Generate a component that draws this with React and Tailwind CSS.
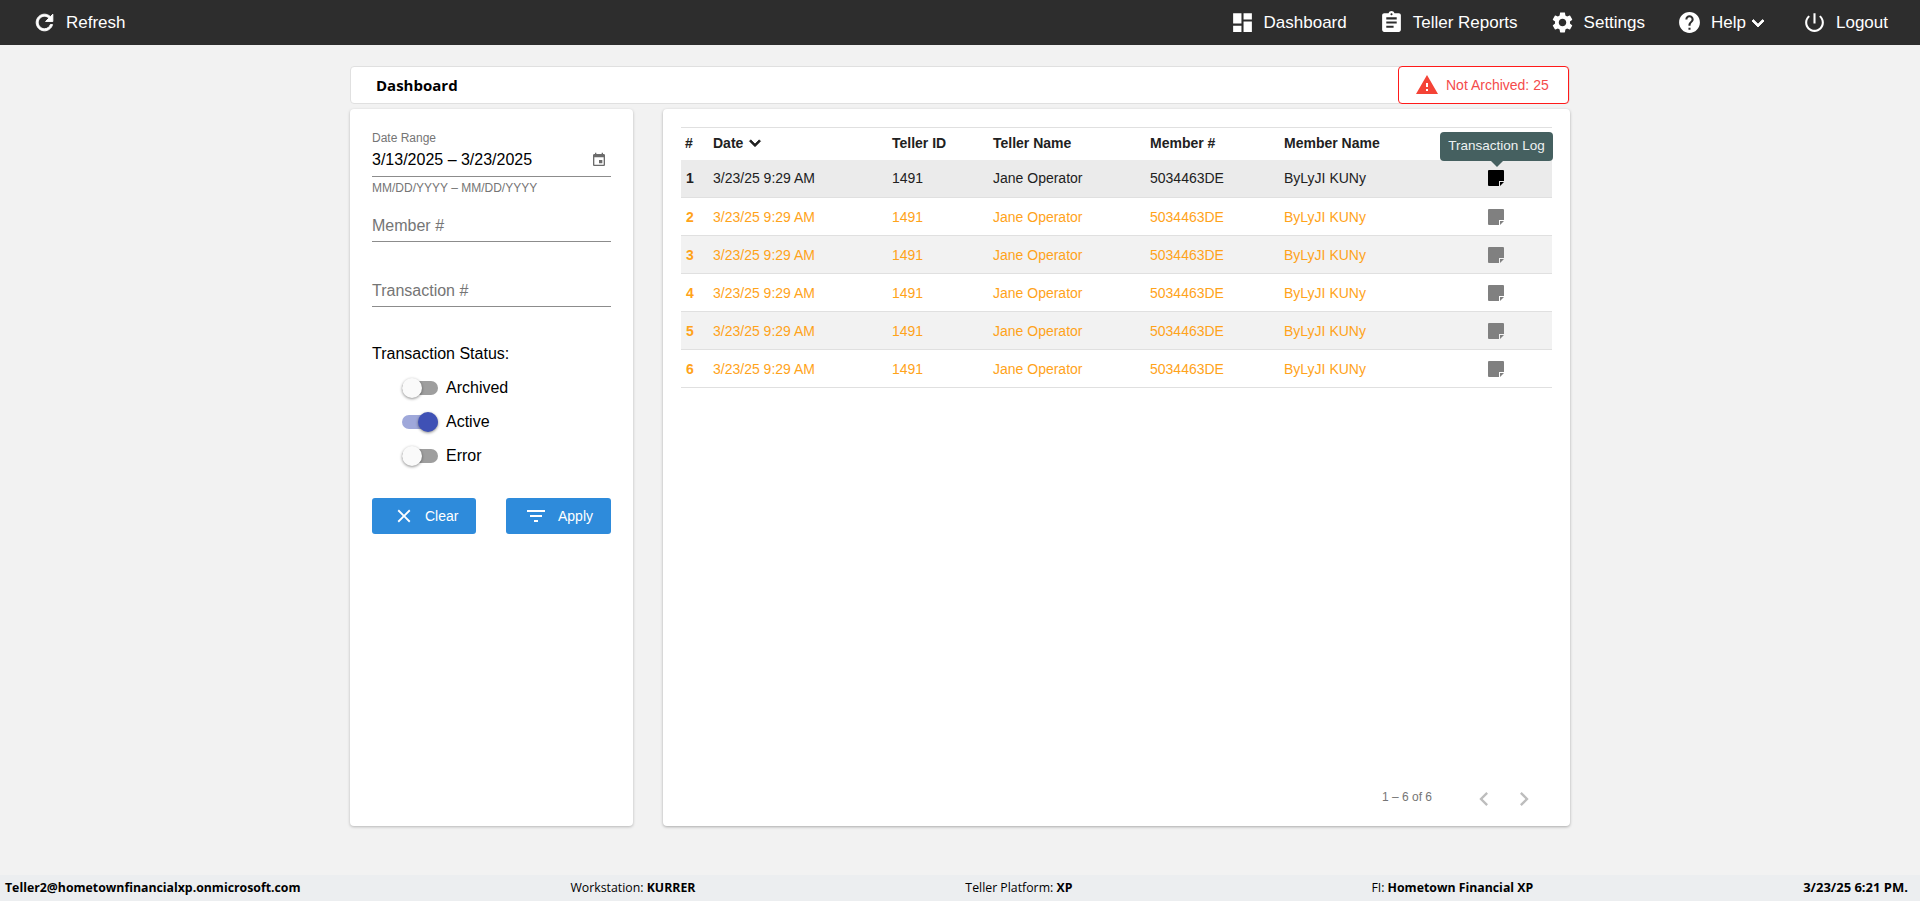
import React from "react";

const rows = [1, 2, 3, 4, 5, 6];

function MatIcon({ d, className, bold }) {
  return (
    <svg
      viewBox="0 0 24 24"
      fill="currentColor"
      stroke={bold ? "currentColor" : "none"}
      strokeWidth={bold ? 0.9 : 0}
      className={className}
    >
      <path d={d} />
    </svg>
  );
}

const icons = {
  refresh:
    "M17.65 6.35C16.2 4.9 14.21 4 12 4c-4.42 0-7.99 3.58-7.99 8s3.57 8 7.99 8c3.73 0 6.84-2.55 7.73-6h-2.08c-.82 2.33-3.04 4-5.65 4-3.31 0-6-2.69-6-6s2.69-6 6-6c1.66 0 3.14.69 4.22 1.78L13 11h7V4l-2.35 2.35z",
  dashboard: "M3 13h8V3H3v10zm0 8h8v-6H3v6zm10 0h8V11h-8v10zm0-18v6h8V3h-8z",
  assignment:
    "M19 3h-4.18C14.4 1.84 13.3 1 12 1c-1.3 0-2.4.84-2.82 2H5c-1.1 0-2 .9-2 2v14c0 1.1.9 2 2 2h14c1.1 0 2-.9 2-2V5c0-1.1-.9-2-2-2zm-7 0c.55 0 1 .45 1 1s-.45 1-1 1-1-.45-1-1 .45-1 1-1zm2 14H7v-2h7v2zm3-4H7v-2h10v2zm0-4H7V7h10v2z",
  settings:
    "M19.14 12.94c.04-.3.06-.61.06-.94 0-.32-.02-.64-.07-.94l2.03-1.58c.18-.14.23-.41.12-.61l-1.92-3.32c-.12-.22-.37-.29-.59-.22l-2.39.96c-.5-.38-1.03-.7-1.62-.94l-.36-2.54c-.04-.24-.24-.41-.48-.41h-3.84c-.24 0-.43.17-.47.41l-.36 2.54c-.59.24-1.13.57-1.62.94l-2.39-.96c-.22-.08-.47 0-.59.22L2.74 8.87c-.12.21-.08.47.12.61l2.03 1.58c-.05.3-.09.63-.09.94s.02.64.07.94l-2.03 1.58c-.18.14-.23.41-.12.61l1.92 3.32c.12.22.37.29.59.22l2.39-.96c.5.38 1.03.7 1.62.94l.36 2.54c.05.24.24.41.48.41h3.84c.24 0 .44-.17.47-.41l.36-2.54c.59-.24 1.13-.56 1.62-.94l2.39.96c.22.08.47 0 .59-.22l1.92-3.32c.12-.22.07-.47-.12-.61l-2.01-1.58zM12 15.6c-1.98 0-3.6-1.62-3.6-3.6s1.62-3.6 3.6-3.6 3.6 1.62 3.6 3.6-1.62 3.6-3.6 3.6z",
  help:
    "M12 2C6.48 2 2 6.48 2 12s4.48 10 10 10 10-4.48 10-10S17.52 2 12 2zm1 17h-2v-2h2v2zm2.07-7.75l-.9.92C13.45 12.9 13 13.5 13 15h-2v-.5c0-1.1.45-2.1 1.17-2.83l1.24-1.26c.37-.36.59-.86.59-1.41 0-1.1-.9-2-2-2s-2 .9-2 2H8c0-2.21 1.79-4 4-4s4 1.79 4 4c0 .88-.36 1.68-.93 2.25z",
  expand: "M16.59 8.59L12 13.17 7.41 8.59 6 10l6 6 6-6z",
  power:
    "M13 3h-2v10h2V3zm4.83 2.17l-1.42 1.42C17.99 7.86 19 9.81 19 12c0 3.87-3.13 7-7 7s-7-3.13-7-7c0-2.19 1.01-4.14 2.58-5.42L6.17 5.17C4.23 6.82 3 9.26 3 12c0 4.97 4.03 9 9 9s9-4.03 9-9c0-2.74-1.23-5.18-3.17-6.83z",
  warning: "M1 21h22L12 2 1 21zm12-3h-2v-2h2v2zm0-4h-2v-4h2v4z",
  event:
    "M17 12h-5v5h5v-5zM16 1v2H8V1H6v2H5c-1.11 0-1.99.9-1.99 2L3 19c0 1.1.89 2 2 2h14c1.1 0 2-.9 2-2V5c0-1.1-.9-2-2-2h-1V1h-2zm3 18H5V8h14v11z",
  clear:
    "M19 6.41L17.59 5 12 10.59 6.41 5 5 6.41 10.59 12 5 17.59 6.41 19 12 13.41 17.59 19 19 17.59 13.41 12z",
  filter: "M10 18h4v-2h-4v2zM3 6v2h18V6H3zm3 7h12v-2H6v2z",
  prev: "M15.41 7.41L14 6l-6 6 6 6 1.41-1.41L10.83 12z",
  next: "M10 6L8.59 7.41 13.17 12l-4.58 4.59L10 18l6-6z",
};

function NavItem({ icon, label, chevron, className, bold }) {
  return (
    <div className={"flex items-center " + (className || "")}>
      <MatIcon d={icon} bold={bold} className="w-[25px] h-[25px] text-white" />
      <span className="ml-[9px] text-[17px] text-white">{label}</span>
      {chevron && <MatIcon d={icons.expand} bold className="w-6 h-6 text-white" />}
    </div>
  );
}

function Toggle({ label, on }) {
  return (
    <div className="flex items-center h-[34px] pl-[30px]">
      <div className="relative w-[36px] h-[14px] mr-[8px]">
        <div className={"w-full h-full rounded-full " + (on ? "bg-[#9fa8da]" : "bg-[#9e9e9e]")} />
        <div
          className={
            "absolute top-[-3px] w-[20px] h-[20px] rounded-full shadow-[0_1px_3px_rgba(0,0,0,0.45)] " +
            (on ? "right-0 bg-[#3f51b5]" : "left-0 bg-[#fafafa]")
          }
        />
      </div>
      <span className="text-[16px] text-black">{label}</span>
    </div>
  );
}

function NoteIcon({ className }) {
  return (
    <svg viewBox="0 0 16 16" className={className}>
      <path d="M0 1a1 1 0 0 1 1-1h14a1 1 0 0 1 1 1v10h-5v5H1a1 1 0 0 1-1-1z" fill="currentColor" />
      <path d="M12 16v-4h4z" fill="currentColor" />
    </svg>
  );
}

function TextLine({ label, className }) {
  return (
    <div className={"h-[36px] border-b border-[#8c8c8c] flex items-end pb-[6px] text-[16px] leading-[18px] text-[#757575] " + className}>
      {label}
    </div>
  );
}

export default function App() {
  return (
    <div className="h-[901px] flex flex-col bg-[#f2f2f2] font-['Liberation_Sans',Arial,sans-serif] overflow-hidden">
      <div className="h-[45px] shrink-0 bg-[#2d2d2d] flex items-center pl-[32px] pr-[32px]">
        <NavItem icon={icons.refresh} label="Refresh" bold />
        <div className="ml-auto flex items-center">
          <NavItem icon={icons.dashboard} label="Dashboard" />
          <NavItem icon={icons.assignment} label="Teller Reports" className="ml-[32px]" />
          <NavItem icon={icons.settings} label="Settings" className="ml-[32px]" />
          <NavItem icon={icons.help} label="Help" chevron className="ml-[32px]" />
          <NavItem icon={icons.power} label="Logout" className="ml-[32px]" />
        </div>
      </div>

      <div className="w-[1220px] mx-auto pt-[21px]">
        <div className="h-[38px] bg-white border border-[#e0e0e0] rounded-[4px] flex items-center justify-between pl-[25px]">
          <span className="font-['Open_Sans',sans-serif] font-bold text-[15px] text-black">Dashboard</span>
          <div className="w-[171px] h-[38px] border-[1.5px] border-[#ff1a1a] rounded-[4px] flex items-center pl-[16px] bg-white">
            <MatIcon d={icons.warning} className="w-6 h-6 text-[#f44336]" />
            <span className="ml-[7px] text-[14px] text-[#f44b4b]">Not Archived: 25</span>
          </div>
        </div>

        <div className="mt-[5px] flex gap-[30px] h-[717px]">
          <div className="w-[283px] bg-white rounded-[4px] shadow-[0_1px_3px_rgba(0,0,0,0.25)] px-[22px] pt-[22px]">
            <div className="text-[12px] leading-[14px] text-[#757575]">Date Range</div>
            <div className="h-[32px] border-b border-[#8c8c8c] pb-[1px] flex items-center justify-between text-[16px] text-black">
              <span>3/13/2025 – 3/23/2025</span>
              <MatIcon d={icons.event} className="w-[16px] h-[16px] text-[#6b6b6b] mr-[4px]" />
            </div>
            <div className="mt-[4px] text-[12px] leading-[14px] text-[#757575]">MM/DD/YYYY – MM/DD/YYYY</div>
            <TextLine label="Member #" className="mt-[11px]" />
            <TextLine label="Transaction #" className="mt-[29px]" />
            <div className="mt-[37px] text-[16px] leading-[20px] text-black">Transaction Status:</div>
            <div className="mt-[7px]">
              <Toggle label="Archived" />
              <Toggle label="Active" on />
              <Toggle label="Error" />
            </div>
            <div className="mt-[25px] flex justify-between">
              <button className="w-[104px] h-[36px] rounded-[3px] bg-[#2e8bdb] text-white text-[14px] flex items-center pl-[21px]">
                <MatIcon d={icons.clear} className="w-[22px] h-[22px]" />
                <span className="ml-[10px]">Clear</span>
              </button>
              <button className="w-[105px] h-[36px] rounded-[3px] bg-[#2e8bdb] text-white text-[14px] flex items-center pl-[18px]">
                <MatIcon d={icons.filter} className="w-[24px] h-[24px]" />
                <span className="ml-[10px]">Apply</span>
              </button>
            </div>
          </div>

          <div className="relative w-[907px] bg-white rounded-[4px] shadow-[0_1px_3px_rgba(0,0,0,0.3)] px-[18px] pt-[18px]">
            <table className="w-[871px] table-fixed border-t border-[#e0e0e0] text-[14px] text-left border-collapse">
              <colgroup>
                <col className="w-[32px]" />
                <col className="w-[179px]" />
                <col className="w-[101px]" />
                <col className="w-[157px]" />
                <col className="w-[134px]" />
                <col className="w-[158px]" />
                <col className="w-[110px]" />
              </colgroup>
              <thead>
                <tr className="h-[32px] text-[#212121]">
                  <th className="pl-[4px] pb-[1px] font-bold">#</th>
                  <th className="pb-[1px] font-bold">
                    <span className="inline-flex items-center">
                      Date
                      <MatIcon d={icons.expand} bold className="w-[22px] h-[22px] ml-[1px]" />
                    </span>
                  </th>
                  <th className="pb-[1px] font-bold">Teller ID</th>
                  <th className="pb-[1px] font-bold">Teller Name</th>
                  <th className="pb-[1px] font-bold">Member #</th>
                  <th className="pb-[1px] font-bold">Member Name</th>
                  <th />
                </tr>
              </thead>
              <tbody>
                {rows.map((n) => (
                  <tr
                    key={n}
                    className={
                      "h-[38px] border-b border-[#e0e0e0] " +
                      (n === 1 ? "bg-[#ebebeb] text-[#212121]" : n % 2 ? "bg-[#f2f2f2] text-[#ffa31a]" : "bg-white text-[#ffa31a]")
                    }
                  >
                    <td className="pl-[5px] pt-[1px] font-bold">{n}</td>
                    <td className="pt-[1px]">3/23/25 9:29 AM</td>
                    <td className="pt-[1px]">1491</td>
                    <td className="pt-[1px]">Jane Operator</td>
                    <td className="pt-[1px]">5034463DE</td>
                    <td className="pt-[1px]">ByLyJI KUNy</td>
                    <td className="pr-[3px]">
                      <NoteIcon className={"w-4 h-4 mx-auto " + (n === 1 ? "text-black" : "text-[#808080]")} />
                    </td>
                  </tr>
                ))}
              </tbody>
            </table>

            <div className="absolute top-[23px] left-[777px] w-[113px] h-[29px] rounded-[4px] bg-[#456060] text-[13.5px] text-[#eef2f2] flex items-center justify-center">
              Transaction Log
              <div className="absolute top-[29px] left-1/2 -translate-x-1/2 border-x-[6px] border-x-transparent border-t-[6px] border-t-[#456060]" />
            </div>

            <div className="absolute left-[719px] top-[676px] flex items-center">
              <span className="text-[12px] text-[#757575] w-[88px] -mt-[4px]">1 – 6 of 6</span>
              <MatIcon d={icons.prev} className="w-7 h-7 text-[#bdbdbd]" />
              <MatIcon d={icons.next} className="w-7 h-7 text-[#bdbdbd] ml-[12px]" />
            </div>
          </div>
        </div>
      </div>

      <div className="mt-auto h-[26px] shrink-0 bg-[#eceef0] flex items-center justify-between pl-[5px] pr-[12px] font-['Open_Sans',sans-serif] text-[12.3px] text-black">
        <b>Teller2@hometownfinancialxp.onmicrosoft.com</b>
        <span>Workstation: <b>KURRER</b></span>
        <span>Teller Platform: <b>XP</b></span>
        <span className="ml-[29px]">FI: <b>Hometown Financial XP</b></span>
        <b className="text-[13px]">3/23/25 6:21 PM.</b>
      </div>
    </div>
  );
}
